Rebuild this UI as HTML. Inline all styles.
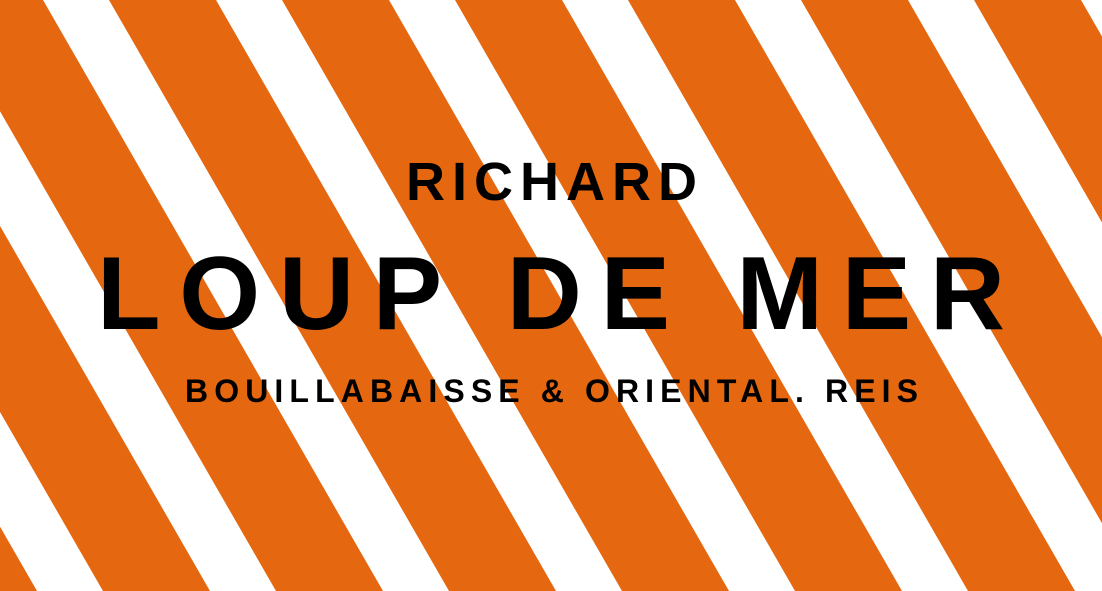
<!DOCTYPE html>
<html><head><meta charset="utf-8"><style>html,body{margin:0;padding:0;background:#fff;overflow:hidden}svg{display:block}</style></head>
<body>
<svg width="1102" height="591" viewBox="0 0 1102 591" xmlns="http://www.w3.org/2000/svg">
<rect width="1102" height="591" fill="#fff"/>
<g fill="#e5670f">
<polygon points="-410,0 -303,0 37,591 -70,591"/>
<polygon points="-237,0 -130,0 210,591 103,591"/>
<polygon points="-64,0 43,0 383,591 276,591"/>
<polygon points="109,0 216,0 556,591 449,591"/>
<polygon points="282,0 389,0 729,591 622,591"/>
<polygon points="455,0 562,0 902,591 795,591"/>
<polygon points="628,0 735,0 1075,591 968,591"/>
<polygon points="801,0 908,0 1248,591 1141,591"/>
<polygon points="974,0 1081,0 1421,591 1314,591"/>
</g>
<g font-family="'Liberation Sans', sans-serif" font-weight="bold" fill="#000">
<text x="406" y="200" font-size="54" textLength="291" lengthAdjust="spacing">RICHARD</text>
<text x="97" y="329" font-size="104" textLength="908" lengthAdjust="spacing">LOUP DE MER</text>
<text x="185" y="402" font-size="32" textLength="733" lengthAdjust="spacing">BOUILLABAISSE &amp; ORIENTAL. REIS</text>
</g>
</svg>
</body></html>
